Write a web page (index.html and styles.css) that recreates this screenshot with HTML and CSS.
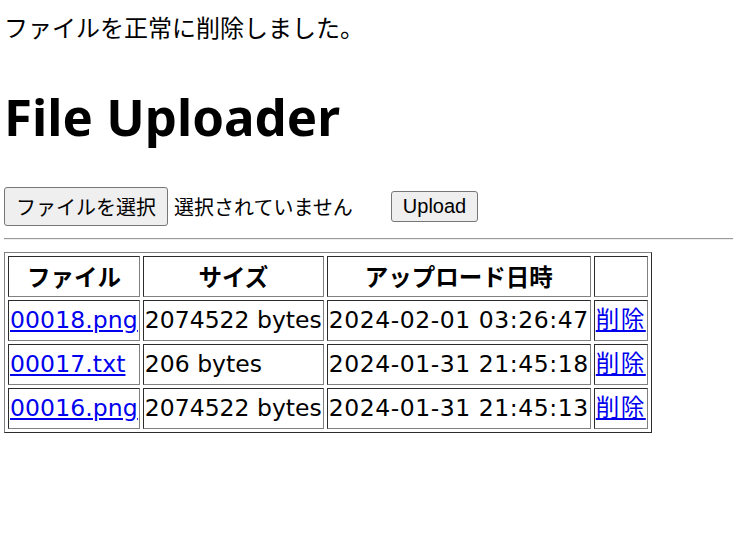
FILE: index.html
```html
<!DOCTYPE html>
<html lang="ja">
<head>
    <meta charset="UTF-8">
    <meta name="viewport" content="width=device-width, initial-scale=1.0">
    <title>File Uploader</title>
    <link rel="stylesheet" href="styles.css">
</head>
<body>
    <p class="message">ファイルを正常に削除しました。</p>

    <h1>File Uploader</h1>

    <form class="upload-form">
        <button type="button" class="file-button">ファイルを選択</button>
        <span class="file-name">選択されていません</span>
        <button type="submit" class="upload-button">Upload</button>
    </form>

    <hr>

    <table class="file-table">
        <tr>
            <th>ファイル</th>
            <th>サイズ</th>
            <th>アップロード日時</th>
            <th></th>
        </tr>
        <tr>
            <td class="name"><a href="#">00018.png</a></td>
            <td class="size">2074522 bytes</td>
            <td class="date">2024-02-01 03:26:47</td>
            <td class="delete"><a href="#">削除</a></td>
        </tr>
        <tr>
            <td class="name"><a href="#">00017.txt</a></td>
            <td class="size">206 bytes</td>
            <td class="date">2024-01-31 21:45:18</td>
            <td class="delete"><a href="#">削除</a></td>
        </tr>
        <tr>
            <td class="name"><a href="#">00016.png</a></td>
            <td class="size">2074522 bytes</td>
            <td class="date">2024-01-31 21:45:13</td>
            <td class="delete"><a href="#">削除</a></td>
        </tr>
    </table>
</body>
</html>
```

FILE: styles.css
```css
body {
    font-family: "DejaVu Sans", "Noto Sans CJK JP", sans-serif;
    font-size: 23.5px;
    color: #000;
    background: #fff;
    margin: 0 0 0 4px;
}

.message {
    font-size: 24px;
    margin: 12px 0 0;
    line-height: 34px;
}

h1 {
    font-family: "Noto Sans", "Noto Sans CJK JP", sans-serif;
    font-size: 51px;
    font-weight: bold;
    line-height: 60px;
    margin: 40px 0 0;
}

.upload-form {
    display: flex;
    align-items: center;
    margin-top: 41px;
    height: 39px;
}

.file-button {
    font-family: "Noto Sans CJK JP", sans-serif;
    font-size: 20px;
    line-height: 29px;
    padding: 4px 11px;
    background: #efefef;
    border: 1px solid #767676;
    border-radius: 3px;
    color: #000;
}

.file-name {
    font-family: "Noto Sans CJK JP", sans-serif;
    font-size: 20px;
    margin-left: 6px;
    margin-right: 38px;
}

.upload-button {
    font-family: "Liberation Sans", Arial, sans-serif;
    font-size: 20px;
    line-height: 23px;
    padding: 3px 11px;
    background: #efefef;
    border: 1px solid #767676;
    border-radius: 3px;
    color: #000;
}

hr {
    margin: 12px 0 0;
    border: none;
    border-top: 1px solid #9a9a9a;
    border-bottom: 1px solid #eeeeee;
}

.file-table {
    margin-top: 12px;
    border: 1px outset #808080;
    border-spacing: 3px;
}

.file-table th,
.file-table td {
    border: 1px inset #808080;
    padding: 1px;
    line-height: 37px;
    white-space: nowrap;
}

.file-table th {
    font-family: "Noto Sans CJK JP", sans-serif;
    font-weight: bold;
}

.file-table a {
    color: #0000ee;
}

.name {
    letter-spacing: 0.1px;
}

.date {
    letter-spacing: 0.55px;
}

.delete {
    letter-spacing: 1.5px;
}
```
